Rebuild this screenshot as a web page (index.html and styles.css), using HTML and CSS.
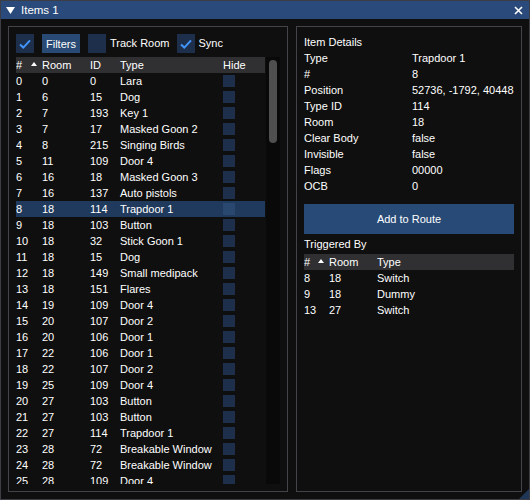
FILE: index.html
```html
<!DOCTYPE html>
<html>
<head>
<meta charset="utf-8">
<link rel="stylesheet" href="styles.css">
</head>
<body>
<div class="window">
  <div class="titlebar">
    <svg class="collapse" width="9" height="7" viewBox="0 0 9 7"><polygon points="0,0 9,0 4.5,7" fill="#fff"/></svg>
    <span class="title">Items 1</span>
    <svg class="close" width="9" height="9" viewBox="0 0 9 9"><path d="M1 1 L8 8 M8 1 L1 8" stroke="#fff" stroke-width="1.6" fill="none"/></svg>
  </div>
  <div class="content">
    <div class="child left">
      <div class="toolbar">
        <span class="checkbox checked"><svg width="18" height="18" viewBox="0 0 18 18"><path d="M4 9.5 L7.3 12.6 L14 5.4" stroke="#4296fa" stroke-width="2" fill="none"/></svg></span>
        <span class="button filters">Filters</span>
        <span class="checkbox track"></span>
        <span class="label">Track Room</span>
        <span class="checkbox checked sync"><svg width="18" height="18" viewBox="0 0 18 18"><path d="M4 9.5 L7.3 12.6 L14 5.4" stroke="#4296fa" stroke-width="2" fill="none"/></svg></span>
        <span class="label">Sync</span>
      </div>
      <div class="table">
        <div class="rows">
          <div class="row items header"><span class="hash">#<svg class="sort" width="6" height="4" viewBox="0 0 6 4"><polygon points="0,4 6,4 3,0" fill="#fff"/></svg></span><span>Room</span><span>ID</span><span>Type</span><span>Hide</span></div>
          <div class="row items"><span>0</span><span>0</span><span>0</span><span>Lara</span><span><i class="hide"></i></span></div>
          <div class="row items"><span>1</span><span>6</span><span>15</span><span>Dog</span><span><i class="hide"></i></span></div>
          <div class="row items"><span>2</span><span>7</span><span>193</span><span>Key 1</span><span><i class="hide"></i></span></div>
          <div class="row items"><span>3</span><span>7</span><span>17</span><span>Masked Goon 2</span><span><i class="hide"></i></span></div>
          <div class="row items"><span>4</span><span>8</span><span>215</span><span>Singing Birds</span><span><i class="hide"></i></span></div>
          <div class="row items"><span>5</span><span>11</span><span>109</span><span>Door 4</span><span><i class="hide"></i></span></div>
          <div class="row items"><span>6</span><span>16</span><span>18</span><span>Masked Goon 3</span><span><i class="hide"></i></span></div>
          <div class="row items"><span>7</span><span>16</span><span>137</span><span>Auto pistols</span><span><i class="hide"></i></span></div>
          <div class="row items selected"><span>8</span><span>18</span><span>114</span><span>Trapdoor 1</span><span><i class="hide"></i></span></div>
          <div class="row items"><span>9</span><span>18</span><span>103</span><span>Button</span><span><i class="hide"></i></span></div>
          <div class="row items"><span>10</span><span>18</span><span>32</span><span>Stick Goon 1</span><span><i class="hide"></i></span></div>
          <div class="row items"><span>11</span><span>18</span><span>15</span><span>Dog</span><span><i class="hide"></i></span></div>
          <div class="row items"><span>12</span><span>18</span><span>149</span><span>Small medipack</span><span><i class="hide"></i></span></div>
          <div class="row items"><span>13</span><span>18</span><span>151</span><span>Flares</span><span><i class="hide"></i></span></div>
          <div class="row items"><span>14</span><span>19</span><span>109</span><span>Door 4</span><span><i class="hide"></i></span></div>
          <div class="row items"><span>15</span><span>20</span><span>107</span><span>Door 2</span><span><i class="hide"></i></span></div>
          <div class="row items"><span>16</span><span>20</span><span>106</span><span>Door 1</span><span><i class="hide"></i></span></div>
          <div class="row items"><span>17</span><span>22</span><span>106</span><span>Door 1</span><span><i class="hide"></i></span></div>
          <div class="row items"><span>18</span><span>22</span><span>107</span><span>Door 2</span><span><i class="hide"></i></span></div>
          <div class="row items"><span>19</span><span>25</span><span>109</span><span>Door 4</span><span><i class="hide"></i></span></div>
          <div class="row items"><span>20</span><span>27</span><span>103</span><span>Button</span><span><i class="hide"></i></span></div>
          <div class="row items"><span>21</span><span>27</span><span>103</span><span>Button</span><span><i class="hide"></i></span></div>
          <div class="row items"><span>22</span><span>27</span><span>114</span><span>Trapdoor 1</span><span><i class="hide"></i></span></div>
          <div class="row items"><span>23</span><span>28</span><span>72</span><span>Breakable Window</span><span><i class="hide"></i></span></div>
          <div class="row items"><span>24</span><span>28</span><span>72</span><span>Breakable Window</span><span><i class="hide"></i></span></div>
          <div class="row items"><span>25</span><span>28</span><span>109</span><span>Door 4</span><span><i class="hide"></i></span></div>
        </div>
        <div class="scrollbar"><div class="grab"></div></div>
      </div>
    </div>
    <div class="child right">
      <div class="line">Item Details</div>
      <div class="details">
        <span>Type</span><span>Trapdoor 1</span>
        <span>#</span><span>8</span>
        <span>Position</span><span>52736, -1792, 40448</span>
        <span>Type ID</span><span>114</span>
        <span>Room</span><span>18</span>
        <span>Clear Body</span><span>false</span>
        <span>Invisible</span><span>false</span>
        <span>Flags</span><span>00000</span>
        <span>OCB</span><span>0</span>
      </div>
      <div class="button route">Add to Route</div>
      <div class="line triggered">Triggered By</div>
      <div class="trig">
        <div class="row trow header"><span class="hash">#<svg class="sort" width="6" height="4" viewBox="0 0 6 4"><polygon points="0,4 6,4 3,0" fill="#fff"/></svg></span><span>Room</span><span>Type</span></div>
        <div class="row trow"><span>8</span><span>18</span><span>Switch</span></div>
        <div class="row trow"><span>9</span><span>18</span><span>Dummy</span></div>
        <div class="row trow"><span>13</span><span>27</span><span>Switch</span></div>
      </div>
    </div>
  </div>
  <svg class="grip" width="10" height="10" viewBox="0 0 10 10"><polygon points="10,0 10,10 0,10" fill="#1f3656"/></svg>
</div>
</body>
</html>
```

FILE: styles.css
```css
* { box-sizing: border-box; }
html, body { margin: 0; padding: 0; background: #0f0f0f; }
body {
  font-family: "Liberation Sans", Arial, sans-serif;
  font-size: 11px;
  color: #ffffff;
}
.window {
  position: relative;
  width: 530px;
  height: 500px;
  border: 1px solid #3d3d45;
  background: #0f0f0f;
  display: flex;
  flex-direction: column;
}
.titlebar {
  height: 18px;
  flex: none;
  background: #294a7a;
  display: flex;
  align-items: center;
  padding-left: 5px;
  padding-right: 6px;
}
.collapse { margin-right: 6px; }
.title { flex: 1; line-height: 18px; font-size: 11.5px; }
.close { display: block; }
.content {
  flex: 1;
  display: flex;
  gap: 8px;
  padding: 7px;
  min-height: 0;
}
.child {
  border: 1px solid #434349;
  padding: 7px;
  display: flex;
  flex-direction: column;
  min-height: 0;
}
.left { width: 280px; flex: none; }
.right { width: 226px; flex: none; }
.toolbar {
  height: 19px;
  flex: none;
  display: flex;
  align-items: center;
}
.checkbox {
  width: 18px;
  height: 19px;
  background: #1d2f4a;
  display: flex;
  align-items: center;
  justify-content: center;
  flex: none;
}
.button {
  background: #294a74;
  display: flex;
  align-items: center;
  justify-content: center;
}
.filters { width: 38px; height: 19px; margin-left: 8px; }
.track { margin-left: 8px; }
.label { margin-left: 4px; line-height: 19px; }
.sync { margin-left: 7px; }
.table {
  margin-top: 4px;
  flex: 1;
  display: flex;
  min-height: 0;
}
.rows {
  width: 249px;
  flex: none;
  overflow: hidden;
}
.row {
  height: 16px;
  line-height: 16px;
  white-space: nowrap;
}
.items {
  display: grid;
  grid-template-columns: 26px 48px 30px 103px 1fr;
}
.header { background: #303033; }
.selected { background: #1f3a5c; }
.hash { display: flex; align-items: center; }
.sort { margin-left: 9px; margin-top: -3px; }
.hide {
  display: block;
  width: 12px;
  height: 12px;
  margin-top: 2px;
  background: #1d2f4a;
}
.selected .hide { background: #2a4770; }
.scrollbar {
  width: 14px;
  flex: none;
  background: #090909;
  padding: 3px;
  margin-left: 1px;
}
.grab {
  width: 8px;
  height: 83px;
  border-radius: 4px;
  background: #4f4f4f;
}
.line { height: 16px; line-height: 16px; }
.details {
  display: grid;
  grid-template-columns: 108px 1fr;
  grid-auto-rows: 16px;
  line-height: 16px;
}
.route {
  margin-top: 10px;
  height: 30px;
  background: #284a76;
}
.triggered { margin-top: 2px; }
.trig { margin-top: 2px; }
.trow {
  display: grid;
  grid-template-columns: 25px 48px 1fr;
}
.trow .sort { margin-left: 8px; }
.grip { position: absolute; right: 0; bottom: 0; }
```
